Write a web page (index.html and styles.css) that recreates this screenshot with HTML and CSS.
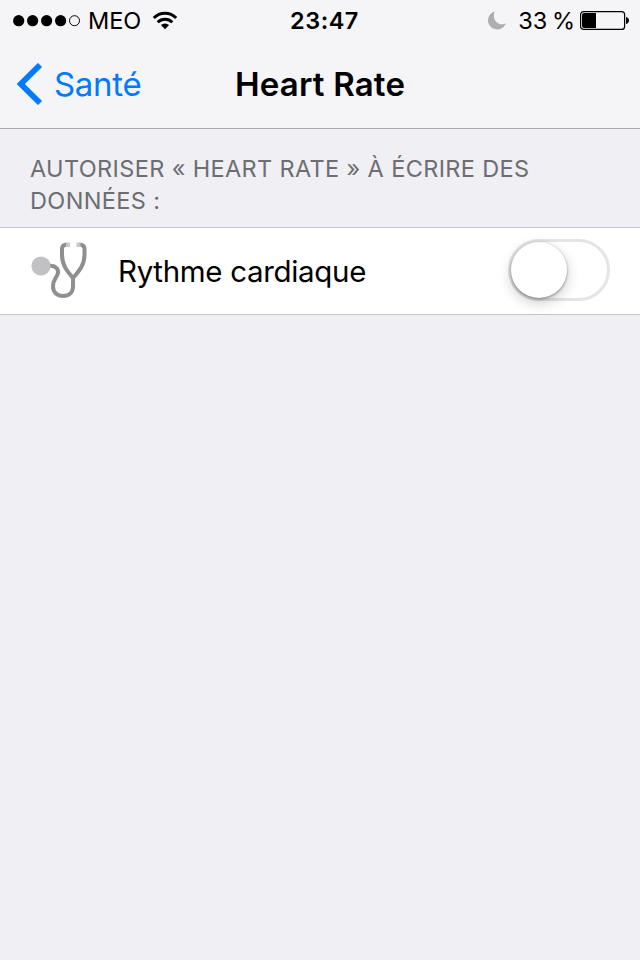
FILE: index.html
```html
<!DOCTYPE html>
<html lang="fr">
<head>
<meta charset="utf-8">
<title>Heart Rate</title>
<link rel="stylesheet" href="styles.css">
</head>
<body>
<header class="top">
  <div class="status">
    <div class="status-left">
      <svg class="signal" width="68" height="12" viewBox="0 0 68 12"><g><circle cx="5.700" cy="5.700" r="5.600"/><circle cx="19.600" cy="5.700" r="5.600"/><circle cx="33.600" cy="5.700" r="5.600"/><circle cx="47.600" cy="5.700" r="5.600"/><circle cx="61.500" cy="5.700" r="5" fill="none" stroke="#000" stroke-width="1"/></g></svg>
      <span class="carrier">MEO</span>
      <svg class="wifi" width="26" height="20" viewBox="0 0 26 20"><path d="M1.800 7a15.700 15.700 0 0 1 22.400 0M5.700 11.300a10.300 10.300 0 0 1 14.600 0" fill="none" stroke="#000" stroke-width="2.900"/><path d="M8.900 14.100a5.900 5.900 0 0 1 8.200 0L13 18.200z"/></svg>
    </div>
    <time class="clock">23:47</time>
    <div class="status-right">
      <svg class="moon" width="20" height="20" viewBox="0 0 20 20"><path d="M7.500 .5A9.200 9.200 0 1 0 18.900 12.300C13 15.600 4.500 10.300 7.500 .5z" fill="#aeaeb0"/></svg>
      <span class="percent">33 %</span>
      <svg class="battery" width="50" height="20" viewBox="0 0 50 20"><rect x=".6" y=".6" width="44" height="17.800" rx="3" fill="none" stroke="#000" stroke-width="1.200"/><path d="M2 4a2 2 0 0 1 2-2H16V17H4a2 2 0 0 1-2-2zM46 6c4 .5 4 6.500 0 7z"/></svg>
    </div>
  </div>
  <nav class="nav">
    <a class="back"><svg width="27" height="42" viewBox="0 0 27 42"><path d="M24 2L4.800 21 24 40" fill="none" stroke="#007aff" stroke-width="5.800"/></svg><span class="back-label">Santé</span></a>
    <h1 class="title">Heart Rate</h1>
  </nav>
</header>
<main>
  <h2 class="section"><span class="line-one">Autoriser « Heart Rate » à écrire des</span><br><span class="line-two">données :</span></h2>
  <div class="row">
    <svg class="stethoscope" width="58" height="58" viewBox="0 0 58 58"><g fill="none" stroke="#8e8e93" stroke-width="4"><path d="M36 3.500C32.500 3.500 31 5 31 8V14C31 24 36 30 42 37C48 30 53.500 24 53.500 14V8C53.500 5 52 3.500 48 3.500"/><path d="M19 24.700C25 24.500 28.500 29 26.500 33.500C24.500 38 22 39 22 45.500C22 51.500 26.500 55 32 55C38 55 42 51.500 42 45.500V36"/></g><path d="M35 1.500h4v4.500h-4zM45.500 1.500h4v4.500h-4z" fill="#c7c7cc"/><circle cx="10" cy="25" r="9.600" fill="#c1c1c3"/></svg>
    <span class="label">Rythme cardiaque</span>
    <span class="toggle"><span class="thumb"></span></span>
  </div>
</main>
</body>
</html>
```
FILE: styles.css
```css
* { box-sizing: border-box; }
body { margin: 0; width: 640px; height: 960px; overflow: hidden; background: #efeff4; color: #000; font-family: Inter, "Liberation Sans", sans-serif; }
svg { display: block; flex: none; }
.top { height: 129px; background: #f5f5f7; border-bottom: 1px solid #a9a9ac; }
.status { height: 40px; padding: 1px 10px 0 13px; display: grid; grid-template-columns: 1fr auto 1fr; align-items: center; font-size: 23.5px; line-height: 39px; }
.status-left, .status-right { display: flex; align-items: center; white-space: nowrap; }
.status-right { justify-content: flex-end; }
.carrier { margin-left: 7px; letter-spacing: -0.1px; }
.wifi { margin-left: 11px; }
.clock { font-weight: 600; font-size: 23.5px; letter-spacing: 0.5px; padding-left: 6px; }
.percent { margin: 0 5px 0 11px; word-spacing: -2px; }
.nav { height: 88px; padding: 0 16px; display: grid; grid-template-columns: 1fr auto 1fr; align-items: center; }
.back { display: flex; align-items: center; color: #007aff; font-size: 33px; gap: 11px; letter-spacing: -0.3px; }
.title { margin: 0; font-size: 33px; font-weight: 600; line-height: 40px; letter-spacing: 0.2px; }
.section { margin: 0; height: 98px; padding: 24px 30px 0; font-size: 23.5px; line-height: 32px; font-weight: 400; color: #6d6d72; text-transform: uppercase; white-space: nowrap; letter-spacing: 0.36px; }
.row { height: 88px; padding: 0 30px 2px 31px; display: flex; align-items: center; background: #fff; border: solid #c8c7cc; border-width: 1px 0; }
.label { margin-left: 29px; padding-top: 2px; font-size: 29.5px; letter-spacing: -0.32px; }
.toggle { margin-left: auto; width: 102px; height: 62px; border: 3px solid #e5e5e5; border-radius: 31px; }
.thumb { display: block; width: 56px; height: 56px; border-radius: 50%; background: #fff; box-shadow: 0 1px 3px rgba(0,0,0,.4), 0 5px 14px rgba(0,0,0,.2); }
```
